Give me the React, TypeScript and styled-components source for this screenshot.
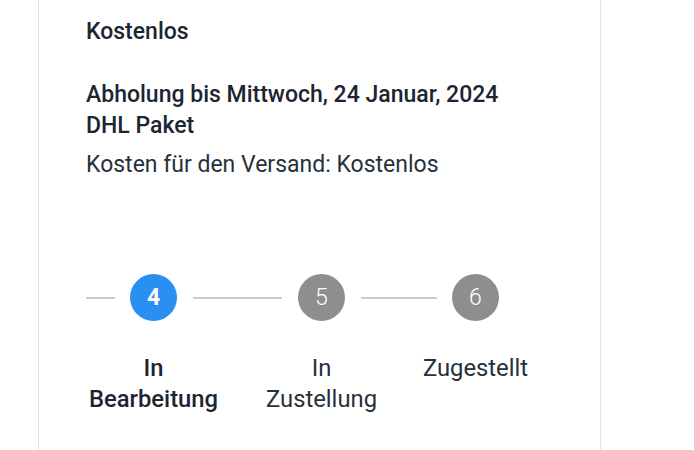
import React from "react";
import styled, { createGlobalStyle } from "styled-components";

const Global = createGlobalStyle`
  html, body { margin: 0; padding: 0; background: #ffffff; }
  body { font-family: Roboto, "Noto Sans", sans-serif; color: #1c2531; }
  #root { height: 450px; overflow: hidden; }
`;

const Page = styled.div`
  height: 450px;
  display: flex;
`;

const Card = styled.section`
  margin-left: 38px;
  width: 563px;
  border-left: 1px solid #e2e2e2;
  border-right: 1px solid #e2e2e2;
  padding: 16px 0 0 47px;
  box-sizing: border-box;
  display: flex;
  flex-direction: column;
`;

const Title = styled.div<{ $gap?: number }>`
  font-size: 23px;
  line-height: 31px;
  font-weight: 500;
  margin-top: ${(p) => p.$gap ?? 0}px;
`;

const Note = styled.div`
  font-size: 23px;
  line-height: 31px;
  font-weight: 400;
  color: #27313c;
  margin-top: 8px;
`;

const Track = styled.div`
  display: flex;
  align-items: flex-start;
  margin-top: 94px;
`;

const Line = styled.div<{ $w: number; $l: number; $r: number }>`
  width: ${(p) => p.$w}px;
  height: 2px;
  background: #cbcbcb;
  margin: 22.5px ${(p) => p.$r}px 0 ${(p) => p.$l}px;
  flex: none;
`;

const Step = styled.div`
  width: 47px;
  flex: none;
  display: flex;
  flex-direction: column;
  align-items: center;
`;

const Circle = styled.div<{ $active?: boolean }>`
  width: 47px;
  height: 47px;
  border-radius: 50%;
  background: ${(p) => (p.$active ? "#2a8ef3" : "#8e8e8e")};
  color: #ffffff;
  display: flex;
  align-items: center;
  justify-content: center;
  font-size: 23px;
  font-weight: ${(p) => (p.$active ? 700 : 300)};
  flex: none;
`;

const Label = styled.div<{ $active?: boolean }>`
  margin-top: 32px;
  font-size: 23.8px;
  line-height: 31px;
  text-align: center;
  white-space: nowrap;
  font-weight: ${(p) => (p.$active ? 500 : 400)};
  color: ${(p) => (p.$active ? "#1c2531" : "#27313c")};
`;

const steps = [
  { n: 4, label: ["In", "Bearbeitung"], active: true },
  { n: 5, label: ["In", "Zustellung"], active: false },
  { n: 6, label: ["Zugestellt"], active: false },
];

const connectors = [
  { w: 89, l: 16, r: 16 },
  { w: 76, l: 16, r: 15 },
];

export default function App() {
  return (
    <>
      <Global />
      <Page>
        <Card>
          <Title>Kostenlos</Title>
          <Title $gap={32}>Abholung bis Mittwoch, 24 Januar, 2024</Title>
          <Title>DHL Paket</Title>
          <Note>Kosten für den Versand: Kostenlos</Note>
          <Track>
            <Line $w={29} $l={0} $r={15} />
            {steps.map((s, i) => (
              <React.Fragment key={s.n}>
                <Step>
                  <Circle $active={s.active}>{s.n}</Circle>
                  <Label $active={s.active}>
                    {s.label.map((t) => (
                      <div key={t}>{t}</div>
                    ))}
                  </Label>
                </Step>
                {i < connectors.length && (
                  <Line
                    $w={connectors[i].w}
                    $l={connectors[i].l}
                    $r={connectors[i].r}
                  />
                )}
              </React.Fragment>
            ))}
          </Track>
        </Card>
      </Page>
    </>
  );
}
